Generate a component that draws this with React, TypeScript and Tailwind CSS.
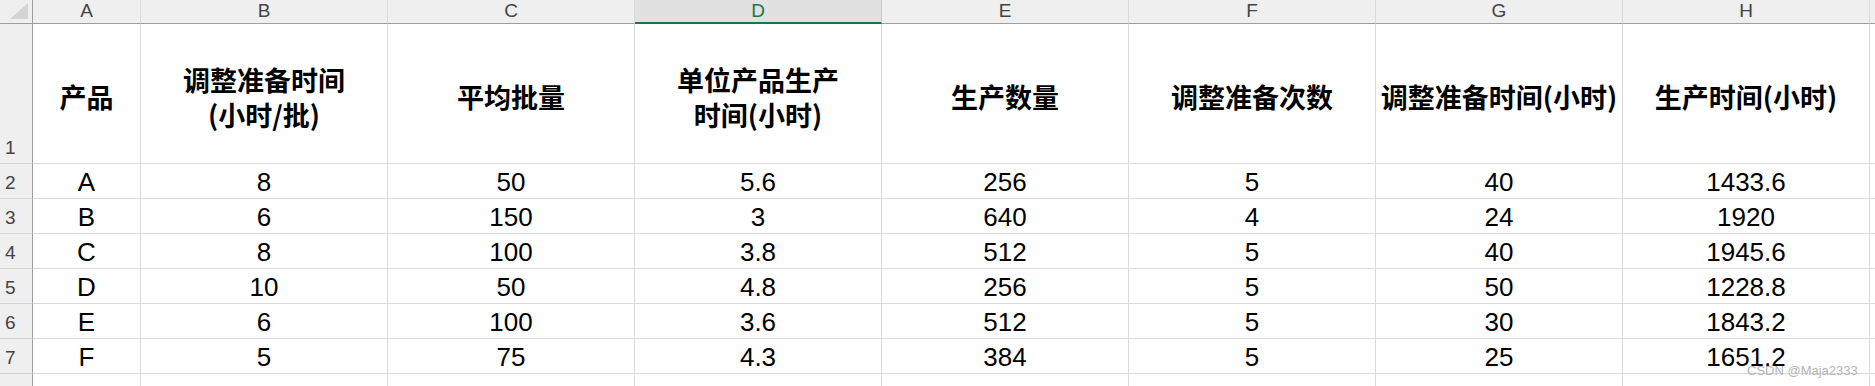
import React from "react";

const COLS = ["A", "B", "C", "D", "E", "F", "G", "H"];

const HEADERS: string[][] = [
  ["产品"],
  ["调整准备时间", "(小时/批)"],
  ["平均批量"],
  ["单位产品生产", "时间(小时)"],
  ["生产数量"],
  ["调整准备次数"],
  ["调整准备时间(小时)"],
  ["生产时间(小时)"],
];

const ROWS: string[][] = [
  ["A", "8", "50", "5.6", "256", "5", "40", "1433.6"],
  ["B", "6", "150", "3", "640", "4", "24", "1920"],
  ["C", "8", "100", "3.8", "512", "5", "40", "1945.6"],
  ["D", "10", "50", "4.8", "256", "5", "50", "1228.8"],
  ["E", "6", "100", "3.6", "512", "5", "30", "1843.2"],
  ["F", "5", "75", "4.3", "384", "5", "25", "1651.2"],
];

const cjk = "font-['Microsoft_YaHei','Noto_Sans_CJK_SC',sans-serif]";
const num = "font-['Liberation_Sans','Noto_Sans_CJK_SC',sans-serif]";

export default function App() {
  return (
    <div className="relative w-[1875px] h-[386px] overflow-hidden bg-white">
      <div className="grid grid-cols-[33px_108px_repeat(7,247px)_1fr] grid-rows-[24px_140px_repeat(6,35px)_1fr] h-full">
        {/* corner */}
        <div className="bg-[#efefef] border-r border-b border-r-[#9e9e9e] border-b-[#9e9e9e] flex items-end justify-end pr-[4px] pb-[4px]">
          <svg width="18" height="16" viewBox="0 0 18 16">
            <polygon points="18,0 18,16 0,16" fill="#d4d4d4" />
          </svg>
        </div>
        {COLS.map((c) => (
          <div
            key={c}
            className={`flex items-center justify-center text-[19px] ${num} border-b ${
              c === "D"
                ? "bg-[#e1e1e1] text-[#217346] border-b-2 border-b-[#217346] border-r border-r-[#c8c8c8]"
                : "bg-[#efefef] text-[#444] border-b-[#9e9e9e] border-r border-r-[#dcdcdc]"
            }`}
          >
            {c}
          </div>
        ))}
        <div className="bg-[#efefef] border-b border-b-[#9e9e9e]" />

        {/* row 1 headers */}
        <div className={`bg-[#efefef] border-r border-r-[#9e9e9e] border-b border-b-[#d4d4d4] flex items-end pl-[5px] pb-[1px] text-[19px] text-[#444] ${num}`}>
          1
        </div>
        {HEADERS.map((h, i) => (
          <div
            key={i}
            className={`border-r border-b border-[#dadada] flex flex-col items-center justify-center pt-[6px] text-[27px] leading-[35px] font-bold text-black whitespace-nowrap ${cjk}`}
          >
            {h.map((l, j) => (
              <span key={j}>{l}</span>
            ))}
          </div>
        ))}
        <div className="border-b border-[#dadada]" />

        {/* data rows */}
        {ROWS.map((r, ri) => (
          <React.Fragment key={ri}>
            <div className={`bg-[#efefef] border-r border-r-[#9e9e9e] border-b border-b-[#d4d4d4] flex items-end pl-[5px] pb-[1px] text-[19px] text-[#444] ${num}`}>
              {ri + 2}
            </div>
            {r.map((v, ci) => (
              <div
                key={ci}
                className={`border-r border-b border-[#dadada] flex items-end justify-center pb-[1px] text-[26px] leading-[30px] text-black ${num}`}
              >
                {v}
              </div>
            ))}
            <div className="border-b border-[#dadada]" />
          </React.Fragment>
        ))}

        {/* row 8 partial */}
        <div className="bg-[#efefef] border-r border-r-[#9e9e9e]" />
        {COLS.map((c) => (
          <div key={c} className="border-r border-[#dadada]" />
        ))}
        <div />
      </div>

      <div className={`absolute left-[1747px] top-[361px] text-[13px] text-[#b4b4b4] ${num}`}>
        CSDN @Maja2333
      </div>
    </div>
  );
}
